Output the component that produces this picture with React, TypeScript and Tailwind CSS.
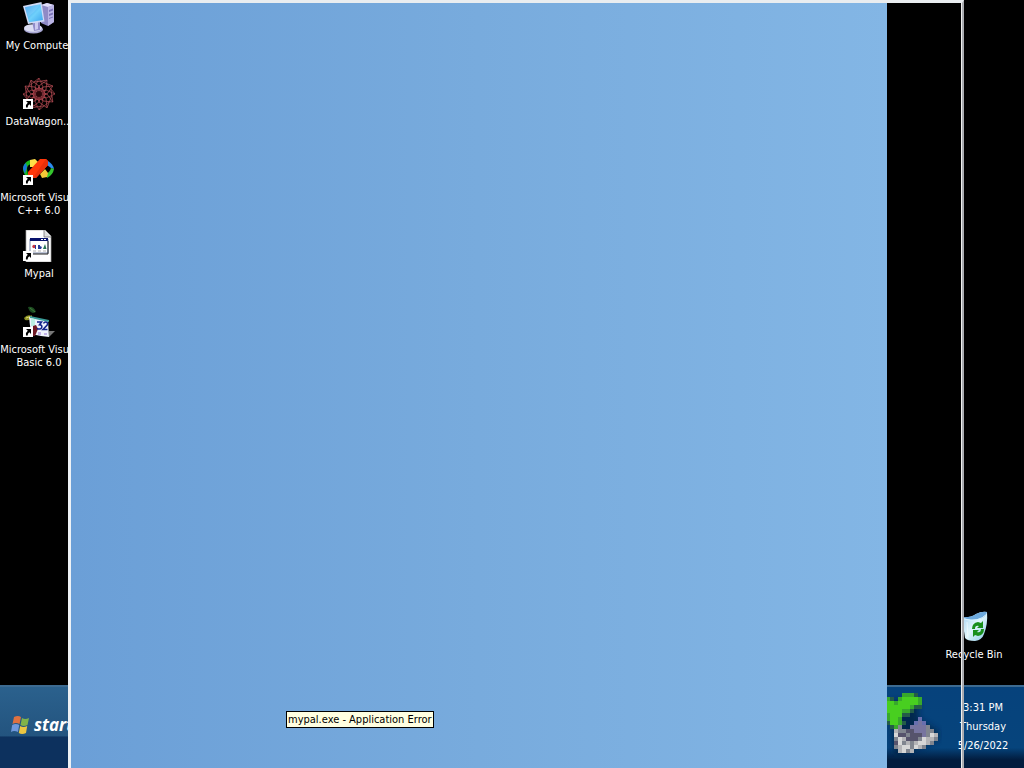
import type { ReactNode } from "react";

function ShortcutArrow() {
  return (
    <g>
      <rect x="0" y="21" width="10" height="10" fill="#fff" />
      <path d="M3 23h5v5l-1.700-1.700q-1.800 1.200-1.600 3.200H3q-.6-3 1.800-4.700z" fill="#000" />
    </g>
  );
}

function ComputerIcon() {
  return (
    <svg viewBox="0 0 32 32" className="size-8" aria-hidden="true">
      <defs>
        <linearGradient id="screen" x1="0" y1="0" x2="1" y2="1">
          <stop offset="0" stopColor="#2b8fe8" />
          <stop offset=".55" stopColor="#6fd0fb" />
          <stop offset="1" stopColor="#3ba4ee" />
        </linearGradient>
      </defs>
      <path d="M18 3l6-2 7 2v17l-6 4-7-3z" fill="#8f8ac6" />
      <path d="M18 3l6-2 7 2-6 2z" fill="#dedcf8" />
      <path d="M25 5l6-2v17l-6 4z" fill="#b9b4e4" />
      <path d="M26 8l4-1.500v2L26 10zM26 12l4-1.500v2L26 14zM26 16l4-1.500v1L26 17z" fill="#7b74b8" />
      <ellipse cx="10.500" cy="27.200" rx="9.500" ry="4.300" fill="#a9a8d4" />
      <ellipse cx="10" cy="26" rx="9" ry="3.800" fill="#dcdef3" />
      <path d="M9 19l8 1v8l-6 1z" fill="#918dca" />
      <path d="M12 19l3 1v7l-3 1z" fill="#cccaf0" />
      <path d="M0 4L18.500 0l3 19.500L5 22z" fill="#cfdaf6" />
      <path d="M2 5.300L17.500 2.200l2.500 15.800L6 20.300z" fill="url(#screen)" />
      <path d="M2 5.300L17.500 2.200 11 10 5 15z" fill="#8fd4ff" opacity=".4" />
    </svg>
  );
}

function DataWagonIcon() {
  const spokes = [0, 30, 60, 90, 120, 150, 180, 210, 240, 270, 300, 330];
  return (
    <svg viewBox="0 0 32 32" className="size-8" aria-hidden="true">
      <g fill="none" stroke="#ad4850" strokeWidth=".7">
        {spokes.map((a) => (
          <g key={a} transform={`rotate(${a} 16 16)`}>
            <path d="M16 0l4 9-4 5-4-5zM16 0L6 8M16 9l7 7" />
          </g>
        ))}
      </g>
      <circle cx="16" cy="16" r="5" fill="none" stroke="#6d1a24" strokeWidth=".7" />
      <circle cx="16" cy="16" r="3" fill="#260609" />
      <ShortcutArrow />
    </svg>
  );
}

function VisualCIcon() {
  return (
    <svg viewBox="0 0 32 32" className="size-8" aria-hidden="true">
      <path d="M0 14q1-6 7-8l1 4q-4 1-4 5l1 6H2q-2-3-2-7z" fill="#19b91c" />
      <path d="M0 15q0-4 3-6l1 4-2 7z" fill="#1676d9" />
      <path d="M7 6l5-1 4 4-3 4H7z" fill="#ffdf48" />
      <path d="M25 7q5 3 6 8l-3-1-4-3z" fill="#2b8cf0" />
      <path d="M31 15q-1 6-7 9l-1-4q4-2 5-6z" fill="#35c52d" />
      <path d="M17 20l5-5 3 4-1 4-5 1z" fill="#f5c738" />
      <path d="M17 5h6l2 2v4L13 24h-3l-5-3v-3z" fill="#ff370a" />
      <path d="M23 5l2 2v4L13 24h-3z" fill="#e9300a" />
      <ShortcutArrow />
    </svg>
  );
}

function MypalIcon() {
  return (
    <svg viewBox="0 0 32 32" className="size-8" aria-hidden="true">
      <path d="M3 0h19l6 6v26H3z" fill="#fff" stroke="#a5a5a5" strokeWidth=".7" />
      <path d="M21 0v7h7" fill="#ddd" stroke="#777" strokeWidth=".8" />
      <path d="M7 9h18v14H7z" fill="#fff" stroke="#7889ae" />
      <path d="M7 8h18v3H7z" fill="#08126c" />
      <path d="M18 9h2v1h-2zM21 9h2v1h-2z" fill="#fff" />
      <path d="M8 24h17V11" fill="none" stroke="#222" />
      <circle cx="11" cy="16.500" r="1.700" fill="#c53242" />
      <path d="M12 15h1v4h-1zM15 15h2v1l2 1-1 2h-3z" fill="#253a9a" />
      <path d="M22 14l1.500 5H20z" fill="#247554" />
      <path d="M10 21h3M15 21h3M20 21h3" stroke="#999" strokeWidth=".8" />
      <ShortcutArrow />
    </svg>
  );
}

function VisualBasicIcon() {
  return (
    <svg viewBox="0 0 32 32" className="size-8" aria-hidden="true">
      <path d="M5 1q6-1 8 5l-3 1q-4-1-5-6z" fill="#1c4b20" />
      <path d="M7 2l5 4" stroke="#427a3b" />
      <path d="M1 12q3-4 8-2-1 5-7 4z" fill="#8c9125" />
      <path d="M3 12l6-2" stroke="#d9d765" />
      <path d="M6 11l19 4 1 16-8-1-10-2z" fill="#eff3fc" />
      <path d="M7 10l19 4v2L7 12z" fill="#3a9c98" />
      <path d="M8 12l4 1v7H8z" fill="#bcefe2" />
      <path d="M10 20l3-1 2 4-3 7h-2z" fill="#701a25" />
      <path d="M26 25h6l-6 6z" fill="#777" />
      <path d="M15 26h3v3h-3zM21 27h3v2h-3z" fill="#c2b2e6" />
      <path d="M14 16h4.500l-2 2.800q3 .2 2.200 2.700T14 22.500M20.500 17.500q1-2 3-1.300 2 .8.500 3L20 23.500h4.500" fill="none" stroke="#13248c" strokeWidth="1.600" />
      <ShortcutArrow />
    </svg>
  );
}

function RecycleIcon() {
  return (
    <svg viewBox="0 0 32 32" className="size-8" aria-hidden="true">
      <defs>
        <linearGradient id="bin" x1="0" y1="0" x2="1" y2="1">
          <stop offset="0" stopColor="#a4cff1" />
          <stop offset=".5" stopColor="#e0f6fc" />
          <stop offset="1" stopColor="#8ac8e6" />
        </linearGradient>
      </defs>
      <path d="M4 6q8 1 14-3 6-3 11-2 1 12-3 22-2 6-9 7-8 0-10-3z" fill="url(#bin)" />
      <path d="M4 6q8 1 14-3 6-3 11-2-1 6-9 7-9 2-16-2z" fill="#6ca9dd" />
      <path d="M6 8q14 4 23-5" fill="none" stroke="#d9f4ff" />
      <path d="M9 11l1 17" stroke="#fff" opacity=".5" />
      <path d="M14 18q0-6 6-7l3 1 2-2v7h-6l2-2q-4-1-4 3z" fill="#198f1c" />
      <path d="M26 18q0 6-6 7l-3-1-2 2v-7h6l-2 2q4 1 4-3z" fill="#198f1c" />
    </svg>
  );
}

function WindowsFlag() {
  return (
    <svg viewBox="0 0 20 20" className="size-5 shrink-0" aria-hidden="true">
      <path d="M4 2q4-2 7 0L9.500 9Q6 7 2.500 9z" fill="#df7140" />
      <path d="M12 3q3 2 7 0l-1.500 7q-4 2-7 0z" fill="#80b349" />
      <path d="M2.200 10q3.500-2 7 0L8 17q-4-2-7 0z" fill="#6e98dc" />
      <path d="M10.200 11q3 2 7 0L16 18q-4 2-7.200 0z" fill="#ecc642" />
    </svg>
  );
}

const trayPixels = [
  "....gggd.....",
  "gd.gGGGGg....",
  "GGgGGGGGg....",
  "GGGGGGgdd....",
  "GGGGggd......",
  "gGGGdd.......",
  "gGGg....q....",
  "dGGgd..qpq...",
  ".dgm..ppppm..",
  "..lmmkkpppmm.",
  "..wkkmkkkpmwl",
  "..mwlkkkmwllm",
  "..kwmlmlwwlm.",
  "..mlwwmwlm...",
  "...lwml......",
];

const trayColors: Record<string, string> = {
  g: "#38a82c",
  G: "#48cf20",
  d: "#245c48",
  p: "#77749f",
  q: "#686fae",
  k: "#56536c",
  m: "#80858f",
  l: "#b4b4b7",
  w: "#d7d7d7",
};

function TrayIcon() {
  return (
    <svg viewBox="0 0 56 64" className="h-16 w-14" aria-hidden="true">
      <defs>
        <filter id="shade" x="-30%" y="-30%" width="160%" height="160%">
          <feGaussianBlur stdDeviation="3" />
        </filter>
      </defs>
      <path d="M4 8h28v18l20 12v8L26 58l-18 4z" fill="#001c3a" opacity=".7" filter="url(#shade)" />
      <g shapeRendering="crispEdges">
        {trayPixels.flatMap((row, y) =>
          row.split("").map((c, x) =>
            c === "." ? null : (
              <rect key={`${x}-${y}`} x={x * 4} y={y * 4} width="4" height="4" fill={trayColors[c]} />
            ),
          ),
        )}
      </g>
    </svg>
  );
}

function DesktopItem({ icon, lines }: { icon: ReactNode; lines: string[] }) {
  return (
    <button type="button" className="flex h-[76px] w-[76px] flex-col items-center gap-[5px] pt-[2px] text-center">
      {icon}
      <span className="leading-[13px]">
        {lines.map((line) => (
          <span key={line} className="block whitespace-nowrap">
            {line}
          </span>
        ))}
      </span>
    </button>
  );
}

export default function App() {
  return (
    <div className="relative flex min-h-screen flex-col overflow-hidden bg-black font-['DejaVu_Sans_Condensed','DejaVu_Sans',sans-serif] text-[11px] text-white">
      <main className="flex flex-1 items-end justify-between">
        <div className="flex flex-col self-start pl-px">
          <DesktopItem icon={<ComputerIcon />} lines={["My Computer"]} />
          <DesktopItem icon={<DataWagonIcon />} lines={["DataWagon..."]} />
          <DesktopItem icon={<VisualCIcon />} lines={["Microsoft Visual", "C++ 6.0"]} />
          <DesktopItem icon={<MypalIcon />} lines={["Mypal"]} />
          <DesktopItem icon={<VisualBasicIcon />} lines={["Microsoft Visual", "Basic 6.0"]} />
        </div>
        <div className="pr-3">
          <DesktopItem icon={<RecycleIcon />} lines={["Recycle Bin"]} />
        </div>
      </main>

      <footer className="flex h-[83px] items-stretch justify-between border-t-2 border-[#3d6b91] bg-linear-to-b from-[#06427c] from-0% via-[#06447c] via-75% to-[#021c3e] to-90%">
        <button
          type="button"
          className="flex w-24 items-center gap-1 bg-linear-to-b from-[#2b618d] from-0% via-[#23547f] via-60% to-[#0d315e] to-62% pl-[10px] pb-[5px] font-['Open_Sans',sans-serif] text-[17px] font-bold italic"
        >
          <WindowsFlag />
          <span>start</span>
        </button>
        <div className="flex items-start">
          <div className="pt-[6px] pr-[2px]">
            <TrayIcon />
          </div>
          <time dateTime="2022-05-26T15:31" className="flex w-20 flex-col pt-[11px] pr-[2px] text-center leading-[19px]">
            <span>3:31 PM</span>
            <span>Thursday</span>
            <span>5/26/2022</span>
          </time>
        </div>
      </footer>

      <section
        aria-label="mypal.exe"
        className="absolute inset-y-0 right-[60px] left-[68px] flex border-t-3 border-r-2 border-l-3 border-t-[#e9edf0] border-r-[#a9abb0] border-l-[#edf1f5]"
      >
        <div className="flex flex-1 border-r border-[#eeeeee] pr-[74px]">
          <div className="flex flex-1 items-end bg-linear-to-r from-[#6b9fd7] via-[#78abdd] via-50% to-[#83b6e5] pb-10 pl-[215px]">
            <div role="tooltip" className="border border-black bg-[#ffffe1] px-px leading-[15px] whitespace-nowrap text-black">
              mypal.exe - Application Error
            </div>
          </div>
        </div>
      </section>
    </div>
  );
}
